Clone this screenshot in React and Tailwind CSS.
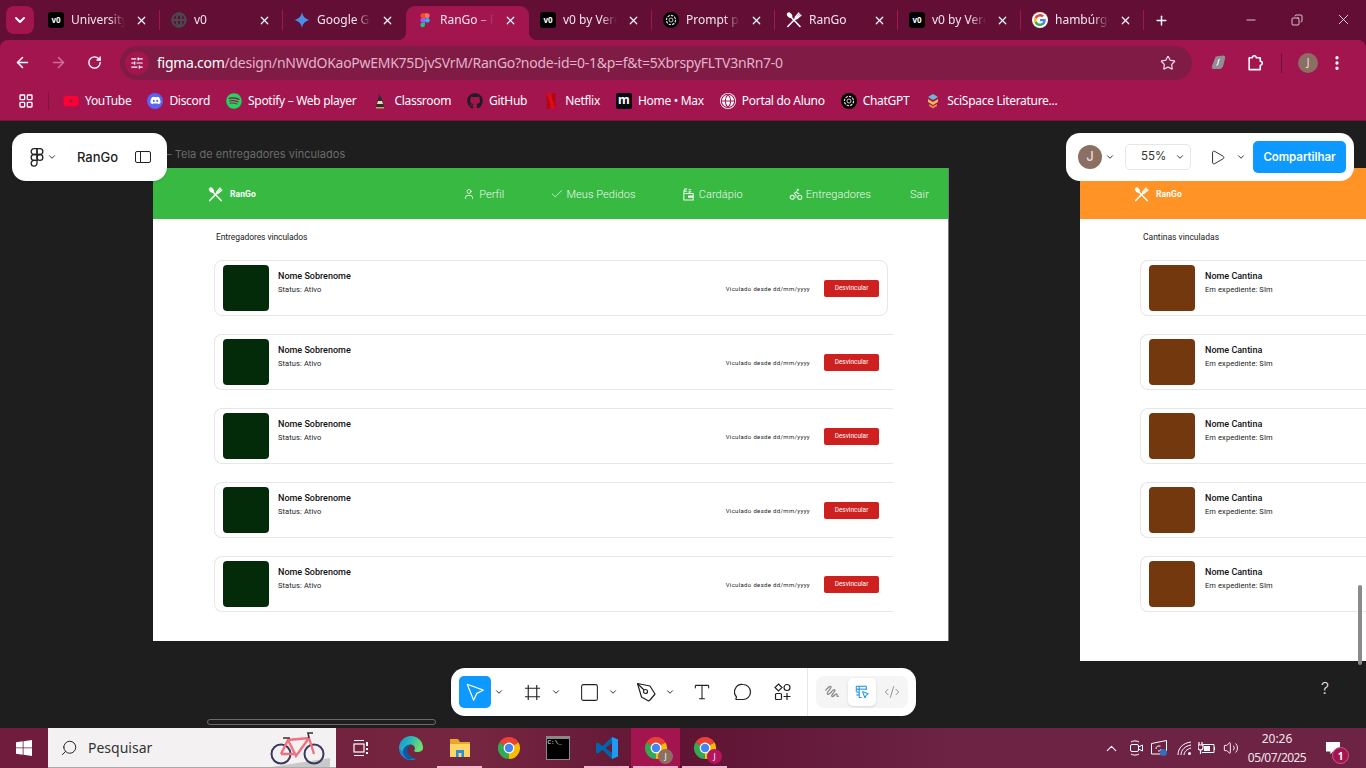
import {
  ArrowLeft, ArrowRight, Bike, Check, ChevronDown, ChevronUp, CodeXml, Copy, EllipsisVertical,
  Globe, LayoutGrid, Minus, Plus, RotateCw, Search, SlidersHorizontal, Square, Star, Type, User,
  Volume2, X, Play,
} from 'lucide-react'
import { FaDiscord, FaGithub, FaSpotify, FaYoutube } from 'react-icons/fa'

const chromeFont = "font-['Noto_Sans',sans-serif]"
const frameFont = "font-['Roboto',sans-serif]"
const figmaFont = "font-['Inter',sans-serif]"

function V0Icon() {
  return (
    <span className="w-4 h-4 rounded-[3px] bg-black flex items-center justify-center text-white text-[8px] font-bold leading-none">
      v0
    </span>
  )
}

function FigmaLogo({ mono }) {
  const fill = (c) => (mono ? 'none' : c)
  return (
    <svg viewBox="0 0 24 24" className="w-full h-full" stroke={mono ? '#222' : 'none'} strokeWidth="1.600">
      <path fill={fill('#f24e1e')} d="M5 5.500A3.500 3.500 0 0 1 8.500 2H12v7H8.500A3.500 3.500 0 0 1 5 5.500z" />
      <path fill={fill('#ff7262')} d="M12 2h3.500a3.500 3.500 0 1 1 0 7H12V2z" />
      <path fill={fill('#1abcfe')} d="M12 12.500a3.500 3.500 0 1 1 7 0 3.500 3.500 0 1 1-7 0z" />
      <path fill={fill('#0acf83')} d="M5 19.500A3.500 3.500 0 0 1 8.500 16H12v3.500a3.500 3.500 0 1 1-7 0z" />
      <path fill={fill('#a259ff')} d="M5 12.500A3.500 3.500 0 0 1 8.500 9H12v7H8.500A3.500 3.500 0 0 1 5 12.500z" />
    </svg>
  )
}

// crossed spoon and fork of the RanGo brand
function RangoMark({ className }) {
  return (
    <svg viewBox="0 0 16 16" className={className} fill="none" stroke="currentColor" strokeLinecap="round">
      <ellipse cx="3.600" cy="3.200" rx="2.200" ry="3.100" fill="currentColor" stroke="none" transform="rotate(-45 3.600 3.200)" />
      <path strokeWidth="1.600" d="M5 5 14 14.500" />
      <path strokeWidth="1.600" d="M10 6 1.800 14.500" />
      <path strokeWidth="1.200" d="M9.200 5.200 12.800 1M10.800 6.800 15 3.200M10 6l3.900-3.900M9.200 5.200c-.5 1 .3 2 1.600 1.600" />
    </svg>
  )
}

function GptIcon() {
  return (
    <svg viewBox="0 0 16 16" className="w-4 h-4">
      <circle cx="8" cy="8" r="8" fill="#000" />
      <circle cx="8" cy="8" r="4.600" fill="none" stroke="#ddd" strokeWidth="1.200" strokeDasharray="2.500 1" />
      <circle cx="8" cy="8" r="2" fill="none" stroke="#ddd" strokeWidth="0.900" />
    </svg>
  )
}

function GoogleIcon() {
  return (
    <svg viewBox="0 0 24 24" className="w-4 h-4">
      <circle cx="12" cy="12" r="12" fill="#fff" />
      <path fill="#4285f4" d="M20.600 12.200c0-.6-.1-1.200-.2-1.800H12v3.400h4.800a4.100 4.100 0 0 1-1.800 2.700v2.200h2.900c1.700-1.600 2.700-3.900 2.700-6.500z" />
      <path fill="#34a853" d="M12 21c2.400 0 4.400-.8 5.900-2.200L15 16.500c-.8.500-1.800.9-3 .9-2.300 0-4.300-1.600-5-3.700H4v2.300A9 9 0 0 0 12 21z" />
      <path fill="#fbbc05" d="M7 13.700a5.400 5.400 0 0 1 0-3.400V8H4a9 9 0 0 0 0 8z" />
      <path fill="#ea4335" d="M12 6.600c1.300 0 2.500.5 3.400 1.300l2.600-2.600A9 9 0 0 0 4 8l3 2.300c.7-2.100 2.700-3.700 5-3.700z" />
    </svg>
  )
}

function ChromeLogo() {
  return (
    <svg viewBox="0 0 24 24" className="w-full h-full">
      <path fill="#ea4335" d="M12 12 2.470 6.500A11 11 0 0 1 21.530 6.500Z" />
      <path fill="#fbbc04" d="M12 12 21.530 6.500A11 11 0 0 1 12 23Z" />
      <path fill="#34a853" d="M12 12 12 23A11 11 0 0 1 2.470 6.500Z" />
      <circle cx="12" cy="12" r="5.400" fill="#fff" />
      <circle cx="12" cy="12" r="4.200" fill="#4285f4" />
    </svg>
  )
}

const tabs = [
  { title: 'University', icon: <V0Icon /> },
  { title: 'v0', icon: <Globe className="w-4 h-4 text-[#4a4a4f]" strokeWidth={3} /> },
  {
    title: 'Google Gemini',
    icon: (
      <svg viewBox="0 0 16 16" className="w-4 h-4">
        <path fill="#4a8fe8" d="M8 0c.6 4.400 3.600 7.400 8 8-4.400.6-7.400 3.600-8 8-.6-4.400-3.600-7.400-8-8 4.400-.6 7.400-3.600 8-8z" />
      </svg>
    ),
  },
  { title: 'RanGo – Figma', icon: <span className="w-4 h-4 block"><FigmaLogo /></span>, active: true },
  { title: 'v0 by Vercel', icon: <V0Icon /> },
  { title: 'Prompt para', icon: <GptIcon /> },
  { title: 'RanGo', icon: <RangoMark className="w-4 h-4 text-white" /> },
  { title: 'v0 by Vercel', icon: <V0Icon /> },
  { title: 'hambúrguer', icon: <GoogleIcon /> },
]

function Tab({ tab, hideSep }) {
  return (
    <div
      className={`relative w-[123px] h-[34px] flex items-center pb-[6px] shrink-0 ${
        tab.active ? 'bg-[#a3154f] rounded-t-[9px]' : ''
      }`}
    >
      {tab.active && (
        <>
          <span className="absolute left-[-8px] bottom-0 w-2 h-2 bg-[radial-gradient(circle_at_0_0,transparent_8px,#a3154f_8px)]" />
          <span className="absolute right-[-8px] bottom-0 w-2 h-2 bg-[radial-gradient(circle_at_100%_0,transparent_8px,#a3154f_8px)]" />
        </>
      )}
      <span className="ml-[11px] w-4 h-4 shrink-0 block">{tab.icon}</span>
      <span className="ml-[7px] w-[54px] overflow-hidden whitespace-nowrap text-[12px] leading-[16px] text-[#f5e6ed] [mask-image:linear-gradient(to_right,black_70%,transparent)]">
        {tab.title}
      </span>
      <X className="ml-[10px] w-[13px] h-[13px] text-white shrink-0" strokeWidth={2.200} />
      {!hideSep && <span className="absolute right-0 top-[4px] w-px h-[20px] bg-[#a3154f]" />}
    </div>
  )
}

function TabStrip() {
  return (
    <div className={`h-10 flex items-end shrink-0 ${chromeFont}`}>
      <div className="w-[37px] h-[40px] pl-[6px] pt-[6px] shrink-0">
        <div className="w-7 h-7 rounded-lg bg-[#a3154f] flex items-center justify-center">
          <ChevronDown className="w-4 h-4 text-white" strokeWidth={3} />
        </div>
      </div>
      {tabs.map((tab, i) => (
        <Tab key={i} tab={tab} hideSep={i === 2 || i === 3} />
      ))}
      <div className="w-[34px] h-[34px] pb-[6px] flex items-center justify-center shrink-0">
        <Plus className="w-[15px] h-[15px] text-white" strokeWidth={2.400} />
      </div>
      <div className="ml-auto h-[40px] flex items-center text-white pb-[1px]">
        <div className="w-[46px] flex justify-center"><Minus className="w-[14px] h-[14px]" strokeWidth={1.300} /></div>
        <div className="w-[46px] flex justify-center"><Copy className="w-3 h-3 -scale-x-100" strokeWidth={1.500} /></div>
        <div className="w-[46px] flex justify-center"><X className="w-[17px] h-[17px]" strokeWidth={1.100} /></div>
      </div>
    </div>
  )
}

function AddressBar() {
  return (
    <div className={`h-[45px] bg-[#a3154f] rounded-t-[8px] flex items-center shrink-0 ${chromeFont}`}>
      <div className="w-[120px] flex items-center text-white shrink-0">
        <div className="w-11 flex justify-center"><ArrowLeft className="w-[17px] h-[17px]" strokeWidth={2.200} /></div>
        <div className="w-[28px] flex justify-center"><ArrowRight className="w-[17px] h-[17px] text-[#cf6d95]" strokeWidth={2.200} /></div>
        <div className="w-[44px] flex justify-center"><RotateCw className="w-[15px] h-[15px]" strokeWidth={2.200} /></div>
      </div>
      <div className="w-[1072px] h-[34px] rounded-full bg-[#801b45] flex items-center shrink-0">
        <div className="ml-[5px] w-6 h-6 rounded-full bg-[#a3154f] flex items-center justify-center">
          <SlidersHorizontal className="w-[14px] h-[14px] text-white" strokeWidth={2} />
        </div>
        <span className="ml-[8px] text-[14px] leading-none tracking-[-0.27px] whitespace-nowrap text-[#e0b4c8]">
          <span className="text-white">figma.com</span>/design/nNWdOKaoPwEMK75DjvSVrM/RanGo?node-id=0-1&amp;p=f&amp;t=5XbrspyFLTV3nRn7-0
        </span>
        <Star className="ml-auto mr-[16px] w-4 h-4 text-[#f0dbe4]" strokeWidth={1.800} />
      </div>
      <svg viewBox="0 0 16 16" className="ml-[19px] w-[15px] h-[15px]">
        <path fill="#8f8f95" d="M5 1.500 13 .5c1.500 0 2.500 1 2 3l-2 8c-.5 2-2 3.500-4 3.500H3C1 15 .5 13.500 1 12z" />
        <path stroke="#fff" strokeWidth="1.200" fill="none" d="M9.500 4.500c-1.500 0-1.500 1-1.700 2.500s-.3 4-2 4" />
      </svg>
      <svg viewBox="0 0 24 24" className="ml-[20px] w-[19px] h-[19px]" fill="none" stroke="#fff" strokeWidth="2" strokeLinejoin="round">
        <path d="M4 6h4a2.500 2.500 0 0 1 5 0h5v4.500a2.500 2.500 0 0 1 0 5V21H4z" />
      </svg>
      <span className="ml-[16px] w-px h-[20px] bg-[#6f1237]" />
      <span className="ml-[16px] w-5 h-5 rounded-full bg-[#8c6f63] flex items-center justify-center text-[10px] text-[#f2e7e2]">J</span>
      <EllipsisVertical className="ml-[10px] w-[18px] h-[18px] text-white" strokeWidth={2.400} />
    </div>
  )
}

const bookmarks = [
  { label: 'YouTube', icon: <FaYoutube className="w-4 h-4 text-[#ff0033]" /> },
  {
    label: 'Discord',
    icon: (
      <span className="w-4 h-4 rounded-full bg-[#5865f2] flex items-center justify-center">
        <FaDiscord className="w-[11px] h-[11px] text-white" />
      </span>
    ),
  },
  { label: 'Spotify – Web player', icon: <FaSpotify className="w-4 h-4 text-[#1ed760]" /> },
  {
    label: 'Classroom',
    icon: (
      <svg viewBox="0 0 16 16" className="w-4 h-4">
        <path fill="#2b2b3a" d="M7 1 10 6 12 14H4L6 6z" />
        <path fill="#e9d9b0" d="M6 8h4l1 3H5z" />
        <path fill="#c9a24a" d="M4 14h8v1.500H4z" />
      </svg>
    ),
  },
  { label: 'GitHub', icon: <FaGithub className="w-4 h-4 text-[#1b1f23]" /> },
  {
    label: 'Netflix',
    icon: (
      <svg viewBox="0 0 16 16" className="w-4 h-4">
        <path fill="#b20710" d="M3.500 0H7v16l-3.500-.5zM9 0h3.500v15.500L9 16z" />
        <path fill="#e50914" d="M3.500 0H7l5.500 15.500L9 16z" />
      </svg>
    ),
  },
  {
    label: 'Home • Max',
    icon: <span className="w-4 h-4 rounded-[2px] bg-[#0b0b14] flex items-center justify-center text-white text-[12px] font-bold leading-none pb-[2px]">m</span>,
  },
  {
    label: 'Portal do Aluno',
    icon: (
      <span className="w-4 h-4 rounded-full bg-white flex items-center justify-center">
        <Globe className="w-4 h-4 text-[#a3154f]" strokeWidth={1.600} />
      </span>
    ),
  },
  { label: 'ChatGPT', icon: <GptIcon /> },
  {
    label: 'SciSpace Literature...',
    icon: (
      <svg viewBox="0 0 16 16" className="w-4 h-4">
        <path fill="#6fb7d6" d="M8 1l5 3-5 3-5-3z" />
        <path fill="#e9b95a" d="M3 6l5 3 5-3v3l-5 3-5-3z" />
        <path fill="#e8804a" d="M4 11l4 2 4-2v2l-4 2.500L4 13z" />
      </svg>
    ),
  },
]

function BookmarksBar() {
  return (
    <div className={`h-[36px] bg-[#a3154f] border-b border-[#7d1040] flex items-center pb-[4px] shrink-0 ${chromeFont}`}>
      <LayoutGrid className="ml-[18px] w-4 h-4 text-white" strokeWidth={2} />
      <span className="ml-[14px] w-px h-[18px] bg-[#7a1540]" />
      <div className="ml-[14px] flex items-center gap-[16px]">
        {bookmarks.map((b) => (
          <div key={b.label} className="flex items-center gap-[6px] shrink-0">
            <span className="w-4 h-4 block">{b.icon}</span>
            <span className="text-[12px] leading-none tracking-[-0.3px] text-white whitespace-nowrap">{b.label}</span>
          </div>
        ))}
      </div>
    </div>
  )
}

function CardapioIcon() {
  return (
    <svg viewBox="0 0 14 14" className="w-[13px] h-[13px]" fill="none" stroke="currentColor" strokeWidth="1.100">
      <path d="M2 6h10v7H2zM2 2.500V13M5.500 1H3v2.500h2.500M7 2h3M7 4h3M8 3.500V6" />
      <path fill="currentColor" d="M7 8.500h5v1.500H7z" />
    </svg>
  )
}

const navItems = [
  { label: 'Perfil', icon: <User className="w-3 h-3" strokeWidth={1.800} />, gap: 'gap-[4px]' },
  { label: 'Meus Pedidos', icon: <Check className="w-[14px] h-[14px]" strokeWidth={1.300} />, gap: 'gap-[2px]' },
  { label: 'Cardápio', icon: <CardapioIcon />, gap: 'gap-[4px]' },
  { label: 'Entregadores', icon: <Bike className="w-[14px] h-[14px]" strokeWidth={1.800} />, gap: 'gap-[3px]' },
]

function FrameLogo({ marginClass }) {
  return (
    <div className={`flex items-center gap-[7px] text-white ${marginClass}`}>
      <RangoMark className="w-[15px] h-[15px]" />
      <span className="text-[8.500px] font-bold leading-none tracking-[0.1px] mt-[1px]">RanGo</span>
    </div>
  )
}

function PersonCard({ name, status, date, shape, image, textGap = 'ml-[9px]' }) {
  return (
    <div className={`h-[56px] border-[#e6e6e6] flex pt-[4px] pl-[8px] bg-white shrink-0 ${shape}`}>
      <div className={`w-[46px] h-[46px] rounded-[4px] shrink-0 ${image}`} />
      <div className={`pt-[5px] ${textGap}`}>
        <p className="text-[9px] font-medium leading-[12px] text-[#111]">{name}</p>
        <p className="mt-[2px] text-[7.500px] leading-[12px] text-[#222] tracking-[0.1px]">{status}</p>
      </div>
      {date && (
        <div className="ml-auto flex items-center h-[46px]">
          <span className="text-[6px] leading-none text-[#222] whitespace-nowrap tracking-[0.33px] mt-[1px]">{date}</span>
          <span className="ml-[14px] w-[55px] h-[17px] rounded-[2px] bg-[#cf2020] text-white text-[6.500px] pt-[2px] flex items-center justify-center">
            Desvincular
          </span>
        </div>
      )}
    </div>
  )
}

function DriversFrame() {
  const shapes = [
    'w-[674px] border rounded-lg pr-[8px]',
    'w-[679px] border-y border-l rounded-l-lg pr-[14px]',
    'w-[679px] border-y border-l rounded-l-lg pr-[14px]',
    'w-[679px] border-y border-l rounded-l-lg pr-[14px]',
    'w-[679px] border-y border-l rounded-l-lg pr-[14px]',
  ]
  return (
    <div className={`absolute left-[153px] top-[47px] w-[796px] h-[473px] bg-white border-r border-[#777] ${frameFont}`}>
      <div className="h-[51px] bg-[#38b942] flex items-center pt-[1px] text-[#eef8ee]">
        <FrameLogo marginClass="ml-[55px]" />
        <div className="ml-auto mr-[19px] flex items-center gap-[46px]">
          {navItems.map((n) => (
            <div key={n.label} className={`flex items-center text-[11px] leading-none tracking-[0.08px] font-light ${n.gap}`}>
              {n.icon}
              <span>{n.label}</span>
            </div>
          ))}
          <span className="-ml-[7px] text-[11px] leading-none tracking-[0.1px] font-light">Sair</span>
        </div>
      </div>
      <div className="pl-[61px] pt-[12px]">
        <p className="ml-[2px] mb-[17px] text-[8.500px] leading-[12px] text-[#222] tracking-[-0.08px]">Entregadores vinculados</p>
        <div className="flex flex-col gap-[18px]">
          {shapes.map((shape, i) => (
            <PersonCard
              key={i}
              name="Nome Sobrenome"
              status="Status: Ativo"
              date="Viculado desde dd/mm/yyyy"
              shape={shape}
              image="bg-[#032b0a]"
            />
          ))}
        </div>
      </div>
    </div>
  )
}

function CanteensFrame() {
  return (
    <div className={`absolute left-[1080px] top-[47px] w-[400px] h-[493px] bg-white ${frameFont}`}>
      <div className="h-[51px] bg-[#ff9325] flex items-center pt-[1px]">
        <FrameLogo marginClass="ml-[54px]" />
      </div>
      <div className="pl-[60px] pt-[12px]">
        <p className="ml-[3px] mb-[17px] text-[8.500px] leading-[12px] text-[#222]">Cantinas vinculadas</p>
        <div className="flex flex-col gap-[18px]">
          {[0, 1, 2, 3, 4].map((i) => (
            <PersonCard
              key={i}
              name="Nome Cantina"
              status="Em expediente: SIm"
              shape="w-[339px] border-y border-l rounded-l-lg"
              image="bg-[#74380f]"
              textGap="ml-[10px]"
            />
          ))}
        </div>
      </div>
    </div>
  )
}

function Chev({ className = '' }) {
  return <ChevronDown className={`w-[10px] h-[10px] text-[#222] ${className}`} strokeWidth={2.200} />
}

function BottomToolbar() {
  const box = 'w-8 h-8 flex items-center justify-center shrink-0'
  const chev = 'w-4 h-8 flex items-center justify-center shrink-0'
  return (
    <div className="absolute left-[451px] top-[547px] w-[465px] h-12 rounded-[14px] bg-white flex items-center pl-[8px] shadow-sm">
      <div className="flex items-center gap-[9px]">
        <div className="flex">
          <div className={`${box} rounded-[5px] bg-[#0d99ff]`}>
            <svg viewBox="0 0 24 24" className="w-[22px] h-[22px]" fill="none" stroke="#fff" strokeWidth="1.300" strokeLinejoin="round">
              <path d="M3.500 3.500 21 10l-7 3.500L10.500 21z" />
            </svg>
          </div>
          <div className={chev}><Chev /></div>
        </div>
        <div className="flex">
          <div className={box}>
            <svg viewBox="0 0 18 18" className="w-[17px] h-[17px]" fill="none" stroke="#222" strokeWidth="1.200">
              <path d="M4.500 1v16M13.500 1v16M1 4.500h16M1 13.500h16" />
            </svg>
          </div>
          <div className={chev}><Chev /></div>
        </div>
        <div className="flex">
          <div className={box}><Square className="w-[21px] h-[21px] text-[#222]" strokeWidth={1.200} /></div>
          <div className={chev}><Chev /></div>
        </div>
        <div className="flex">
          <div className={box}>
            <svg viewBox="0 0 20 20" className="w-5 h-5" fill="none" stroke="#222" strokeWidth="1.200" strokeLinejoin="round">
              <path d="M1.500 1.500 14 4l5 8-5 6-1.500 1L5.500 15z" />
              <circle cx="9.500" cy="9.500" r="2" />
              <path d="M1.500 1.500 8 8" />
            </svg>
          </div>
          <div className={chev}><Chev /></div>
        </div>
        <div className={`${box} -ml-[1px]`}><Type className="w-5 h-5 text-[#222]" strokeWidth={1.300} /></div>
        <div className={box}>
          <svg viewBox="0 0 18 18" className="w-[18px] h-[18px]" fill="none" stroke="#222" strokeWidth="1.200">
            <path d="M9 1.500a7.500 7.500 0 0 1 0 15H2.500c-.5 0-.7-.3-.5-.7L2.500 14A7.500 7.500 0 0 1 9 1.500z" />
          </svg>
        </div>
        <div className={`${box} -ml-[1px]`}>
          <svg viewBox="0 0 18 18" className="w-[18px] h-[18px]" fill="none" stroke="#222" strokeWidth="1.200">
            <path d="M4.500 1 8 4.500 4.500 8 1 4.500z" />
            <circle cx="13" cy="4.500" r="3" />
            <rect x="1.500" y="10.500" width="6" height="6" rx="1" />
            <path d="M13 10v7M9.500 13.500h7" />
          </svg>
        </div>
      </div>
      <span className="ml-[8px] w-px h-12 bg-[#e6e6e6]" />
      <div className="ml-[8px] w-[92px] h-8 rounded-[8px] bg-[#f5f5f5] flex items-center">
        <div className="w-8 flex justify-center">
          <svg viewBox="0 0 18 18" className="w-4 h-4" fill="none" stroke="#8a8a8a" strokeWidth="1.400" strokeLinecap="round" strokeLinejoin="round">
            <path d="M2 7c2-3 5-5 6-4S2 10 4 11.500 10 5.500 12 6.500 7 13 9 14s3-3 5-3-1 3 2 3" />
          </svg>
        </div>
        <div className="w-7 h-7 rounded-[5px] bg-white shadow flex items-center justify-center">
          <svg viewBox="0 0 18 18" className="w-[15px] h-[15px]" fill="none" stroke="#0d8ce9" strokeWidth="1.200">
            <path d="M1.500 8V1.500h12V6M1.500 5h12M5 1.500V15h3M1.500 8.500H5M1.500 12H5" />
            <path d="M9 8l7 2.500-2.500 1.500-1.500 3.500z" />
          </svg>
        </div>
        <div className="flex-1 flex justify-center"><CodeXml className="w-4 h-4 text-[#8a8a8a]" strokeWidth={1.400} /></div>
      </div>
    </div>
  )
}

function FigmaCanvas() {
  return (
    <div className={`relative flex-1 bg-[#1e1e1e] overflow-hidden ${figmaFont}`}>
      <p className="absolute left-[166px] top-[27px] text-[11px] leading-[13px] tracking-[0.04px] text-[#6b6b6b] whitespace-nowrap">
        – Tela de entregadores vinculados
      </p>
      <DriversFrame />
      <CanteensFrame />

      <div className="absolute left-[12px] top-[12px] w-[155px] h-12 rounded-[14px] bg-white flex items-center shadow-sm">
        <span className="ml-[15px] w-5 h-5 block"><FigmaLogo mono /></span>
        <Chev className="ml-[0px]" />
        <span className="ml-[20px] text-[13px] font-medium leading-none text-[#222]">RanGo</span>
        <svg viewBox="0 0 16 12" className="ml-[17px] w-4 h-3" fill="none" stroke="#222" strokeWidth="1">
          <rect x="0.500" y="0.500" width="15" height="11" rx="1.500" />
          <path d="M5.500 .5v11" />
        </svg>
      </div>

      <div className="absolute left-[1066px] top-[12px] w-[288px] h-12 rounded-[14px] bg-white flex items-center">
        <span className="ml-[12px] w-6 h-6 rounded-full bg-[#8c6f63] flex items-center justify-center text-[13px] font-medium text-[#e8dbd5]">J</span>
        <Chev className="ml-[3px]" />
        <div className="ml-[10px] w-[66px] h-[26px] rounded-[5px] border border-[#e6e6e6] flex items-center pl-[15px] pr-[3px] text-[11.500px] text-[#333] tracking-[-0.05px]">
          55%
          <Chev className="ml-auto mr-[2px]" />
        </div>
        <Play className="ml-[18px] w-[17px] h-[17px] text-[#222]" strokeWidth={1.300} />
        <Chev className="ml-[10px]" />
        <div className="ml-[7px] w-[93px] h-8 rounded-[5px] bg-[#0d99ff] flex items-center justify-center pt-[1px] text-[11.500px] tracking-[-0.05px] font-semibold text-white">
          Compartilhar
        </div>
      </div>

      <BottomToolbar />

      <span className="absolute left-[207px] top-[598px] w-[229px] h-[6px] rounded-full border border-[#6a6a6a]" />
      <span className="absolute left-[1358px] top-[464px] w-[4px] h-[80px] rounded-full bg-[#8a8a8a]" />
      <span className="absolute left-[1321px] top-[557px] text-[16px] leading-5 font-light text-[#e4e4e4]">?</span>
    </div>
  )
}

function TaskIcon({ children, active, underline }) {
  return (
    <div className={`relative w-[49px] h-10 flex items-center justify-center shrink-0 ${active ? 'bg-[#a3154f]' : ''}`}>
      <span className="block w-6 h-6">{children}</span>
      {underline && <span className="absolute left-[2px] right-[2px] bottom-0 h-[2px] bg-[#f2b6cf]" />}
    </div>
  )
}

function ChromeTask({ letterBg }) {
  return (
    <>
      <ChromeLogo />
      <span className={`absolute left-[27px] top-[21px] w-[15px] h-[15px] rounded-full flex items-center justify-center text-[8px] text-white ${letterBg}`}>
        J
      </span>
    </>
  )
}

function Taskbar() {
  return (
    <div className={`h-10 shrink-0 flex items-center bg-[linear-gradient(90deg,#701c3d_0%,#752640_35%,#5f1434_50%,#6d2343_70%,#6d2343_100%)] ${chromeFont}`}>
      <div className="w-12 h-10 flex items-center justify-center shrink-0">
        <svg viewBox="0 0 16 16" className="w-4 h-4" fill="#fff">
          <path d="M0 2.200 6.700 1.300V7.500H0zM7.500 1.200 16 0V7.500H7.500zM0 8.300H6.700V14.700L0 13.800zM7.500 8.300H16V16L7.500 14.800z" />
        </svg>
      </div>
      <div className="relative w-[288px] h-10 bg-[#f4f1f2] flex items-center overflow-hidden shrink-0 border-b border-[#aaa]">
        <Search className="ml-[12px] w-[18px] h-[18px] text-[#222] -scale-x-100" strokeWidth={1.300} />
        <span className="ml-[10px] text-[14px] leading-none text-[#333]">Pesquisar</span>
        <svg viewBox="0 0 66 40" className="absolute right-[6px] top-0 w-[66px] h-10" fill="none">
          <path fill="#c9c9c9" d="M0 40 40 34l26-4v10z" />
          <circle cx="17" cy="26" r="9.500" stroke="#3b3a5c" strokeWidth="2" />
          <circle cx="50" cy="26" r="9.500" stroke="#3b3a5c" strokeWidth="2" />
          <path stroke="#f2707f" strokeWidth="2.400" d="M17 26 24 12 45 10 50 26M24 12 32 28 45 10M17 26H32" />
          <path stroke="#333" strokeWidth="1.600" d="M45 10 44 5h5M19 10h7" />
        </svg>
      </div>
      <div className="w-[50px] flex justify-center shrink-0">
        <svg viewBox="0 0 16 16" className="w-4 h-4" fill="none" stroke="#fff" strokeWidth="1.200">
          <path d="M1 .5h10M1 15.500h10" />
          <rect x="1" y="4" width="10" height="8" />
          <path d="M14 2v4M14 8v2M14 12v2" strokeWidth="2" />
        </svg>
      </div>
      <div className="flex">
        <TaskIcon>
          <svg viewBox="0 0 24 24" className="w-full h-full">
            <defs>
              <linearGradient id="edgeTop" x1="0" y1="0" x2="1" y2="0.300">
                <stop offset="0" stopColor="#1593d8" />
                <stop offset="0.500" stopColor="#27b8b8" />
                <stop offset="1" stopColor="#6fdc6f" />
              </linearGradient>
            </defs>
            <path fill="#1a8ad8" d="M0 12A12 12 0 0 0 18 22.400C16 23 10 23 7 16 4 15 0 15 0 12z" />
            <path fill="url(#edgeTop)" d="M0 12A12 12 0 0 1 24 12c0 3-3 4-6 4-2 0-3-.6-3-1.500 2-1 1-6-3.500-6C7 8.500 6 13 7 16 4 15 0 15 0 12z" />
            <path fill="#0c59a4" d="M10 23.500C5 22 3 17 4.500 13 6 9.500 10 8 13 9c-3 0-5 3-4.500 6.500.4 3.500 3.500 6 7 6-1.500 1.500-3.500 2-5.500 2z" />
          </svg>
        </TaskIcon>
        <TaskIcon underline>
          <svg viewBox="0 0 24 24" className="w-full h-full">
            <path fill="#e8a72c" d="M2 3h8l2 3h10v3H2z" />
            <path fill="#ffd666" d="M2 8h20v13H2z" />
            <path fill="#2a8fd8" d="M8 14h8v7h-2.500v-4h-3v4H8z" />
          </svg>
        </TaskIcon>
        <TaskIcon><ChromeLogo /></TaskIcon>
        <TaskIcon>
          <span className="block w-full h-full bg-black border border-[#888] border-t-[3px] text-[6px] leading-[8px] text-white font-['Liberation_Mono',monospace] pl-[1px]">
            C:\_
          </span>
        </TaskIcon>
        <TaskIcon underline>
          <svg viewBox="0 0 24 24" className="w-full h-full">
            <path fill="#0065a9" d="M17 1 7.500 10 3 6.500 1 7.500v9L3 17.500 7.500 14 17 23l6-2.500v-17zM17 7v10l-6.500-5z" />
            <path fill="#1f9cf0" d="M17 1l6 2.500v17L17 23z" />
          </svg>
        </TaskIcon>
        <TaskIcon active underline><ChromeTask letterBg="bg-[#8c6f63]" /></TaskIcon>
        <TaskIcon underline><ChromeTask letterBg="bg-[#b5155c]" /></TaskIcon>
      </div>
      <div className="ml-auto flex items-center text-white">
        <ChevronUp className="w-[17px] h-[17px]" strokeWidth={1.500} />
        <svg viewBox="0 0 13 16" className="ml-[10px] w-[13px] h-4" fill="none" stroke="#fff" strokeWidth="1">
          <rect x="0.500" y="4.500" width="8" height="7" rx="1.500" />
          <path d="M8.500 7 12.500 5v6l-4-2M1 2c2-1.500 6-1.500 8 0M1 14c2 1.500 6 1.500 8 0" />
        </svg>
        <svg viewBox="0 0 16 16" className="ml-[8px] w-4 h-4" fill="none" stroke="#fff" strokeWidth="1">
          <path d="M.5 3.500 15.500.5V11h-4M.5 3.500V14h9" />
          <path d="M5 9c0-2 1-3 3-3l1.500 0M10 9c0 1.500-1 2-3 2" />
          <circle cx="12.500" cy="12.500" r="3.500" fill="#2e6fc0" stroke="none" />
        </svg>
        <svg viewBox="0 0 15 15" className="ml-[10px] w-[15px] h-[15px]" fill="none" stroke="#fff" strokeWidth="1">
          <path d="M1 14C1 7 6 2 14 1M4 14c0-5 4-9 10-10M7 14c0-3 3-6 7-7" />
          <circle cx="12.500" cy="12.500" r="1.500" fill="#fff" stroke="none" />
        </svg>
        <svg viewBox="0 0 17 14" className="ml-[6px] w-[17px] h-[14px]" fill="none" stroke="#fff" strokeWidth="1">
          <path d="M1 1v3M4 1v3M0 4h5v2.500a2.500 2.500 0 0 1-5 0zM2.500 9v4" strokeWidth="1.200" />
          <path d="M5 3.500h11v8H4" />
          <path d="M16.500 6v3" />
          <path fill="#fff" stroke="none" d="M6 5h6v5H6z" />
        </svg>
        <Volume2 className="ml-[8px] w-4 h-4" strokeWidth={1.400} />
        <div className="ml-[5px] w-[66px] flex flex-col items-center text-[12px] leading-[19px] text-[#f2e6eb]">
          <span>20:26</span>
          <span className="tracking-[-0.55px]">05/07/2025</span>
        </div>
        <div className="relative ml-[15px] mr-[25px] w-4 h-10 flex items-center">
          <svg viewBox="0 0 18 16" className="w-4 h-[14px]" fill="#fff"><path d="M1 1h16v11H9l-3 3v-3H1z" /></svg>
          <span className="absolute left-[7px] top-[19px] w-[17px] h-[17px] rounded-full bg-[#a3154f] border border-[#d05a8a] flex items-center justify-center text-[10px] font-bold leading-none">1</span>
        </div>
      </div>
    </div>
  )
}

export default function App() {
  return (
    <div className="w-[1366px] h-[768px] flex flex-col overflow-hidden bg-[#630e35]">
      <TabStrip />
      <AddressBar />
      <BookmarksBar />
      <FigmaCanvas />
      <Taskbar />
    </div>
  )
}
